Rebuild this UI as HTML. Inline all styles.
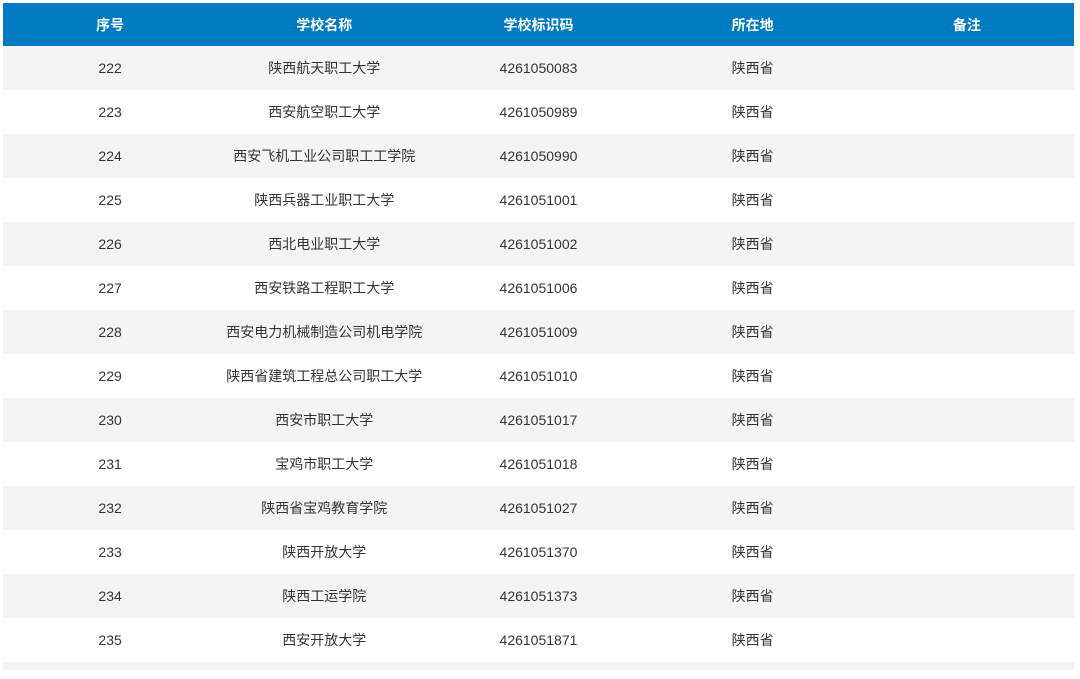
<!DOCTYPE html>
<html><head><meta charset="utf-8"><style>
body{margin:0;background:#fff;width:1080px;height:679px;overflow:hidden;font-family:"Liberation Sans","Noto Sans CJK SC",sans-serif;}
table{position:absolute;left:3px;top:3px;width:1071px;border-collapse:collapse;table-layout:fixed;}
th{background:#007bc2;color:#fff;font-weight:bold;font-size:14px;height:43px;padding:0;text-align:center;}
td{height:44px;padding:0;text-align:center;font-size:14px;color:#333;}
tr:nth-child(even) td{background:#f4f4f4;}
.last td{height:8px;}
</style></head><body>
<table>
<tr><th>序号</th><th>学校名称</th><th>学校标识码</th><th>所在地</th><th>备注</th></tr>
<tr><td>222</td><td>陕西航天职工大学</td><td>4261050083</td><td>陕西省</td><td></td></tr>
<tr><td>223</td><td>西安航空职工大学</td><td>4261050989</td><td>陕西省</td><td></td></tr>
<tr><td>224</td><td>西安飞机工业公司职工工学院</td><td>4261050990</td><td>陕西省</td><td></td></tr>
<tr><td>225</td><td>陕西兵器工业职工大学</td><td>4261051001</td><td>陕西省</td><td></td></tr>
<tr><td>226</td><td>西北电业职工大学</td><td>4261051002</td><td>陕西省</td><td></td></tr>
<tr><td>227</td><td>西安铁路工程职工大学</td><td>4261051006</td><td>陕西省</td><td></td></tr>
<tr><td>228</td><td>西安电力机械制造公司机电学院</td><td>4261051009</td><td>陕西省</td><td></td></tr>
<tr><td>229</td><td>陕西省建筑工程总公司职工大学</td><td>4261051010</td><td>陕西省</td><td></td></tr>
<tr><td>230</td><td>西安市职工大学</td><td>4261051017</td><td>陕西省</td><td></td></tr>
<tr><td>231</td><td>宝鸡市职工大学</td><td>4261051018</td><td>陕西省</td><td></td></tr>
<tr><td>232</td><td>陕西省宝鸡教育学院</td><td>4261051027</td><td>陕西省</td><td></td></tr>
<tr><td>233</td><td>陕西开放大学</td><td>4261051370</td><td>陕西省</td><td></td></tr>
<tr><td>234</td><td>陕西工运学院</td><td>4261051373</td><td>陕西省</td><td></td></tr>
<tr><td>235</td><td>西安开放大学</td><td>4261051871</td><td>陕西省</td><td></td></tr>
<tr class="last"><td></td><td></td><td></td><td></td><td></td></tr>
</table>
</body></html>
